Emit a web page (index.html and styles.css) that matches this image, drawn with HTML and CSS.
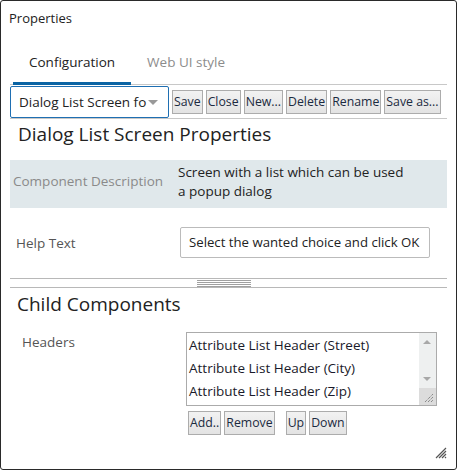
FILE: index.html
```html
<!DOCTYPE html>
<html>
<head>
<meta charset="utf-8">
<link rel="stylesheet" href="styles.css">
</head>
<body>
<div class="window">
  <div class="title">Properties</div>
  <div class="tabs">
    <div class="tab active">Configuration</div>
    <div class="tab">Web UI style</div>
  </div>
  <div class="toolbar">
    <div class="select"><span class="select-text">Dialog List Screen fo</span><span class="caret"></span></div>
    <button class="btn">Save</button>
    <button class="btn">Close</button>
    <button class="btn">New...</button>
    <button class="btn">Delete</button>
    <button class="btn">Rename</button>
    <button class="btn">Save as...</button>
  </div>
  <div class="heading h1">Dialog List Screen Properties</div>
  <div class="desc">
    <div class="desc-label">Component Description</div>
    <div class="desc-text">Screen with a list which can be used<br>a popup dialog</div>
  </div>
  <div class="field">
    <div class="field-label">Help Text</div>
    <div class="input">Select the wanted choice and click OK</div>
  </div>
  <div class="splitter"><div class="grip"></div></div>
  <div class="heading h2">Child Components</div>
  <div class="child">
    <div class="child-label">Headers</div>
    <div class="child-right">
      <div class="listbox">
        <div class="items">
          <div class="item">Attribute List Header (Street)</div>
          <div class="item">Attribute List Header (City)</div>
          <div class="item">Attribute List Header (Zip)</div>
        </div>
        <div class="scroll">
          <div class="sb-track">
            <span class="arr up"></span>
            <span class="arr down"></span>
          </div>
          <div class="sb-corner">
            <svg width="16" height="16" viewBox="0 0 16 16"><path d="M6 14 L14 6 M9 14 L14 9 M12 14 L14 12" stroke="#666" stroke-width="1" stroke-dasharray="1 1" fill="none"/></svg>
          </div>
        </div>
      </div>
      <div class="list-btns">
        <button class="btn">Add..</button>
        <button class="btn">Remove</button>
        <button class="btn gap">Up</button>
        <button class="btn">Down</button>
      </div>
    </div>
  </div>
  <svg class="resize" width="12" height="12" viewBox="0 0 12 12"><path d="M1 11 L11 1 M4 11 L11 4 M7 11 L11 7 M10 11 L11 10" stroke="#555" stroke-width="1.2" fill="none"/></svg>
</div>
</body>
</html>
```
FILE: styles.css
```css
html, body { margin: 0; padding: 0; background: #fff; }
body { font-family: "Open Sans", "Noto Sans", sans-serif; color: #222; }
.window {
  width: 457px; height: 470px; box-sizing: border-box;
  border: 1px solid #2a2a2a; border-radius: 3px;
  position: relative; overflow: hidden;
  display: flex; flex-direction: column;
}
.title { font-size: 13px; line-height: 18px; padding: 8px 0 0 8px; height: 28px; box-sizing: border-box; }
.tabs { display: flex; margin: 18px 9px 0 9px; border-bottom: 1px solid #c8c8c8; height: 38px; box-sizing: border-box; }
.tab { padding: 0 16px; font-size: 13.5px; line-height: 30px; color: #8c8c8c; }
.tab.active { color: #222; border-bottom: 3px solid #0a64a4; margin-bottom: -1px; margin-left: 3px; }
.toolbar { display: flex; align-items: center; margin: 0 9px; height: 34px; border-bottom: 1px solid #c8c8c8; box-sizing: border-box; }
.select {
  flex-shrink: 0;
  width: 159px; height: 32px; box-sizing: border-box; border: 1px solid #1f6fb2; border-radius: 2px;
  display: flex; align-items: center; padding-left: 8px; font-size: 13.5px; color: #222; position: relative;
  white-space: nowrap;
}
.caret { position: absolute; left: 137px; top: 13px; width: 0; height: 0; border-left: 5px solid transparent; border-right: 5px solid transparent; border-top: 5px solid #999; }
.btn {
  flex-shrink: 0; white-space: nowrap;
  font-family: inherit; font-size: 12.3px; color: #1b2a40; height: 24px; padding: 0 1px;
  border: 1px solid #acacac; border-radius: 0; background: linear-gradient(#f2f2f2, #e3e3e3);
  margin-left: 3px; line-height: 20px;
}
.heading { font-size: 19px; color: #222; padding-left: 8px; margin: 0 9px; }
.h1 { line-height: 26px; margin-top: 2px; }
.desc { display: flex; background: #e0e8eb; margin: 13px 9px 0 9px; height: 48px; align-items: center; }
.desc-label { width: 165px; flex-shrink: 0; padding-left: 3px; font-size: 13.5px; color: #8a8a8a; margin-top: -6px; }
.desc-text { font-size: 13.5px; line-height: 19px; color: #222; margin-top: -4px; }
.field { display: flex; align-items: center; margin: 19px 9px 0 9px; height: 31px; }
.field-label { width: 170px; flex-shrink: 0; box-sizing: border-box; padding-left: 6px; font-size: 13.5px; color: #555; margin-top: 1px; }
.input { width: 250px; height: 31px; box-sizing: border-box; border: 1px solid #bbb; border-radius: 2px; padding-left: 8px; font-size: 13.2px; line-height: 29px; white-space: nowrap; overflow: hidden; }
.splitter { margin: 20px 9px 0 9px; height: 10px; border-top: 1px solid #b8b8b8; border-bottom: 1px solid #b8b8b8; box-sizing: border-box; display: flex; justify-content: center; }
.grip { width: 54px; height: 8px; margin-left: -10px; background: repeating-linear-gradient(#fff 0, #fff 1px, #a0a0a0 1px, #a0a0a0 2px); }
.h2 { line-height: 28px; margin-top: 2px; padding-left: 7px; }
.child { display: flex; margin: 14px 9px 0 9px; }
.child-label { width: 176px; flex-shrink: 0; padding-left: 12px; font-size: 13.5px; color: #555; line-height: 20px; box-sizing: border-box; margin-top: 0; }
.child-right { display: flex; flex-direction: column; }
.listbox { width: 251px; height: 74px; box-sizing: border-box; border: 1px solid #ababab; display: flex; }
.items { flex: 1; padding-top: 1px; }
.item { font-size: 13.5px; line-height: 23px; padding-left: 2px; color: #1a1a2a; white-space: nowrap; }
.scroll { width: 17px; display: flex; flex-direction: column; }
.sb-track { flex: 1; background: #eef0f0; position: relative; }
.arr { position: absolute; left: 4px; width: 0; height: 0; border-left: 4px solid transparent; border-right: 4px solid transparent; }
.arr.up { top: 7px; border-bottom: 4px solid #a8a8a8; }
.arr.down { top: 44px; border-top: 4px solid #a8a8a8; }
.sb-corner { height: 17px; background: #dcdcdc; }
.sb-corner svg { display: block; }
.list-btns { display: flex; margin-top: 5px; }
.list-btns .btn:first-child { margin-left: 2px; }
.list-btns .gap { margin-left: 11px; }
.resize { position: absolute; right: 9px; bottom: 10px; }
```
